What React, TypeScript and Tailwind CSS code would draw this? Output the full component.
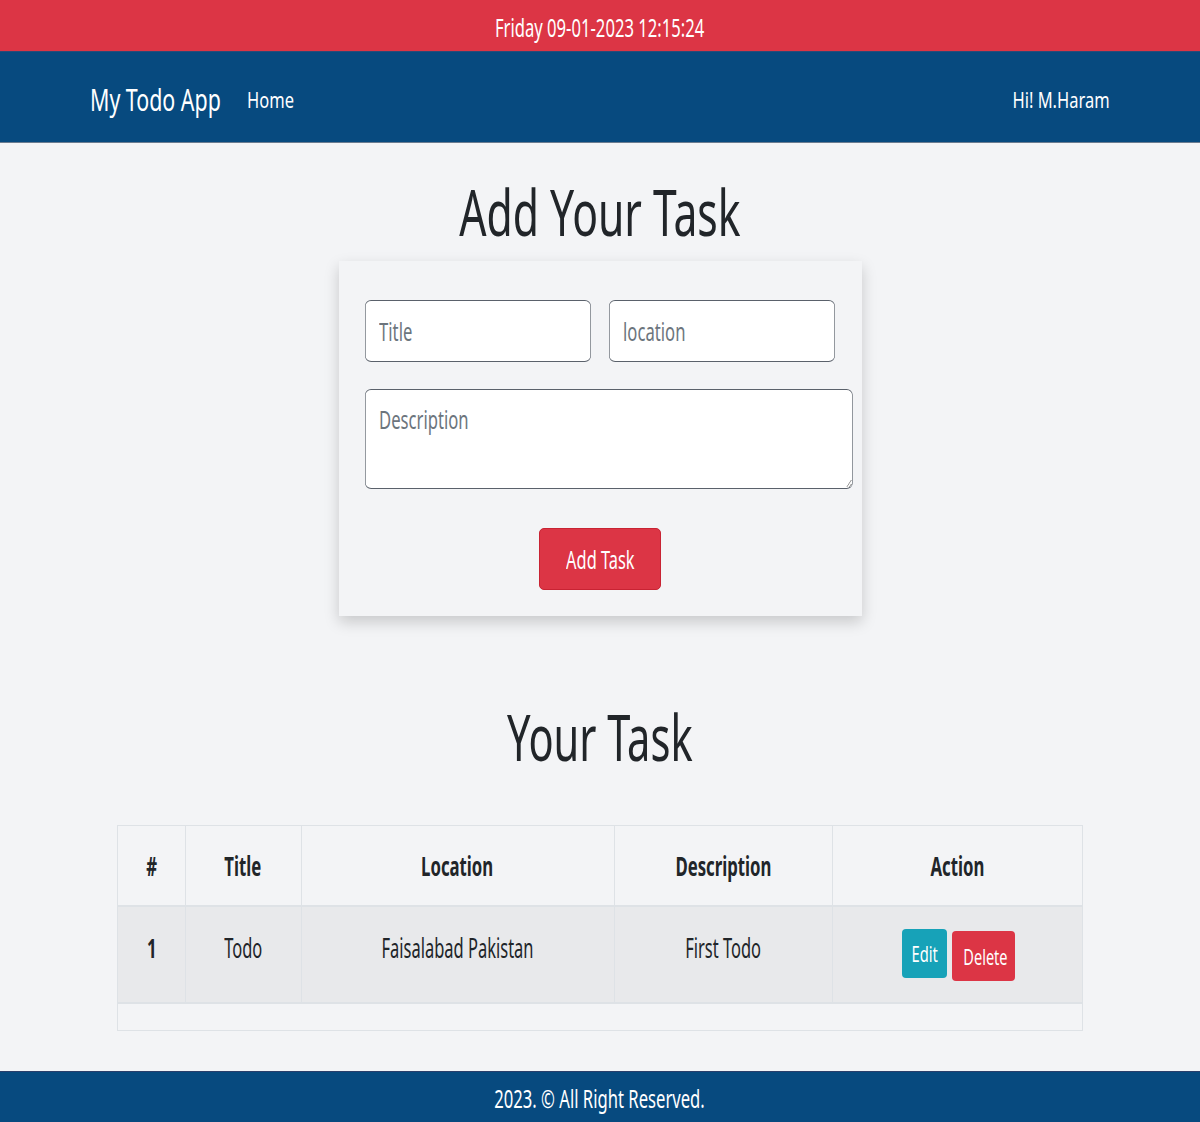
import React from 'react';

const tasks = [
  { id: 1, title: 'Todo', location: 'Faisalabad Pakistan', description: 'First Todo' },
];

// the screenshot's type is narrow, so glyphs get squeezed horizontally
function Sq({ className, children }: { className: string; children: React.ReactNode }) {
  return <span className={`inline-block whitespace-nowrap ${className}`}>{children}</span>;
}

const field =
  'bg-white border-y border-x-[1.6px] border-[#5a616b] rounded-[9.5px/6px] px-[21px] text-[26px] placeholder:text-[#6c757d] outline-none origin-left scale-x-[0.64]';

export default function App() {
  return (
    <div className="min-h-screen flex flex-col bg-[#f3f4f6] font-['Noto_Sans',sans-serif] text-[#212529] overflow-x-hidden">
      <div className="h-[52px] bg-[#dc3545] flex items-center justify-center text-white text-[26px] pt-[3px] border-b border-[#2a4a78]">
        <Sq className="scale-x-[0.64]">Friday 09-01-2023 12:15:24</Sq>
      </div>

      <nav className="h-[91px] bg-[#074a7f] flex items-center pl-[90px] pr-[90px] pt-[4px] text-white border-b border-[#6b7c90]">
        <div className="w-[130px] mr-[27px] text-[31px]">
          <Sq className="origin-left scale-x-[0.69]">My Todo App</Sq>
        </div>
        <a href="#" className="w-[46px] text-[22px]">
          <Sq className="origin-left scale-x-[0.75]">Home</Sq>
        </a>
        <div className="ml-auto w-[97px] text-[22px] flex justify-end">
          <Sq className="origin-right scale-x-[0.75]">Hi! M.Haram</Sq>
        </div>
      </nav>

      <main className="flex flex-col items-center">
        <h1 className="mt-[26px] text-[64px] leading-[86px]">
          <Sq className="scale-x-[0.667]">Add Your Task</Sq>
        </h1>

        <form className="mt-[6px] w-[523px] bg-[#f3f4f6] shadow-[0_6px_14px_rgba(0,0,0,0.18)] pl-[26px] pr-[9px] pt-[39px] pb-[26px]">
          <div className="flex gap-[18px]">
            <div className="w-[226px] h-[62px]">
              <input placeholder="Title" className={`w-[353px] h-[62px] ${field}`} />
            </div>
            <div className="w-[226px] h-[62px]">
              <input placeholder="location" className={`w-[353px] h-[62px] ${field}`} />
            </div>
          </div>
          <div className="mt-[27px] w-[488px] h-[100px]">
            <textarea
              placeholder="Description"
              className={`block w-[762px] h-[100px] py-[12px] leading-[34px] ${field}`}
            />
          </div>
          <div className="flex justify-center mt-[39px] pr-[17px]">
            <button type="button" className="w-[122px] h-[62px] bg-[#dc3545] text-white rounded-[5px] text-[26px] border border-[#c82333]">
              <Sq className="scale-x-[0.63]">Add Task</Sq>
            </button>
          </div>
        </form>

        <h2 className="mt-[78px] text-[64px] leading-[86px]">
          <Sq className="scale-x-[0.65]">Your Task</Sq>
        </h2>

        <div className="mt-[45px] w-[966px] border border-[#dee2e6] pb-[26px] mb-[40px]">
          <table className="w-full border-collapse text-center text-[27px]">
            <thead>
              <tr className="h-[80px] border-b-2 border-[#dee2e6]">
                <th className="w-[67px] border-r border-[#dee2e6] font-bold pt-[2px]">
                  <Sq className="scale-x-[0.62]">#</Sq>
                </th>
                <th className="w-[116px] border-r border-[#dee2e6] font-bold pt-[2px]">
                  <Sq className="scale-x-[0.62]">Title</Sq>
                </th>
                <th className="w-[313px] border-r border-[#dee2e6] font-bold pt-[2px]">
                  <Sq className="scale-x-[0.62]">Location</Sq>
                </th>
                <th className="w-[218px] border-r border-[#dee2e6] font-bold pt-[2px]">
                  <Sq className="scale-x-[0.62]">Description</Sq>
                </th>
                <th className="font-bold pt-[2px]">
                  <Sq className="scale-x-[0.62]">Action</Sq>
                </th>
              </tr>
            </thead>
            <tbody>
              {tasks.map((t) => (
                <tr key={t.id} className="h-[97px] bg-[#e8e9eb] border-b-2 border-[#dee2e6]">
                  <td className="border-r border-[#dee2e6] font-bold pb-[12px]">
                    <Sq className="scale-x-[0.62]">{t.id}</Sq>
                  </td>
                  <td className="border-r border-[#dee2e6] pb-[12px]">
                    <Sq className="scale-x-[0.61]">{t.title}</Sq>
                  </td>
                  <td className="border-r border-[#dee2e6] pb-[12px]">
                    <Sq className="scale-x-[0.61]">{t.location}</Sq>
                  </td>
                  <td className="border-r border-[#dee2e6] pb-[12px]">
                    <Sq className="scale-x-[0.61]">{t.description}</Sq>
                  </td>
                  <td>
                    <div className="flex justify-center items-start gap-[5px] pl-[2px]">
                      <button className="w-[45px] h-[49px] bg-[#17a2b8] text-white rounded-[4px] text-[22px]">
                        <Sq className="scale-x-[0.67]">Edit</Sq>
                      </button>
                      <button className="mt-[2px] w-[63px] h-[50px] bg-[#dc3545] text-white rounded-[4px] text-[22px] pt-[2px]">
                        <Sq className="scale-x-[0.66]">Delete</Sq>
                      </button>
                    </div>
                  </td>
                </tr>
              ))}
            </tbody>
          </table>
        </div>
      </main>

      <footer className="h-[51px] bg-[#074a7f] flex items-center justify-center text-white text-[26px] pt-[2px] border-t border-[#2a3f6a]">
        <Sq className="scale-x-[0.64]">2023. © All Right Reserved.</Sq>
      </footer>
    </div>
  );
}
